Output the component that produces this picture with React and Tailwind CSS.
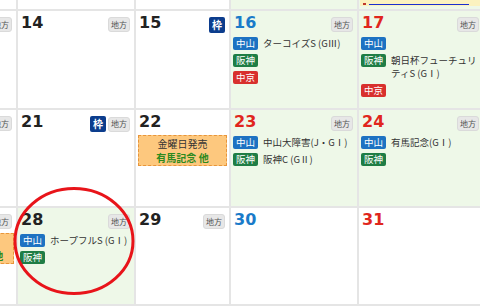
import React from 'react'

const badgeColors = {
  '中山': 'bg-[#1d72c2]',
  '阪神': 'bg-[#1f7d45]',
  '中京': 'bg-[#d8302d]',
}

const dayColors = {
  black: 'text-[#222222]',
  blue: 'text-[#1a7bc9]',
  red: 'text-[#e0261d]',
}

const rows = [
  [
    { day: '13', tags: ['地方'] },
    { day: '14', tags: ['地方'] },
    { day: '15', tags: ['枠'] },
    { day: '16', color: 'blue', green: true, tags: ['地方'], races: [['中山', 'ターコイズS (GⅢ)'], ['阪神', ''], ['中京', '']] },
    { day: '17', color: 'red', green: true, tags: ['地方'], races: [['中山', ''], ['阪神', '朝日杯フューチュリティS (GⅠ)'], ['中京', '']] },
  ],
  [
    { day: '20', tags: ['地方'] },
    { day: '21', tags: ['枠', '地方'] },
    { day: '22', sale: ['金曜日発売', '有馬記念 他'] },
    { day: '23', color: 'red', green: true, tags: ['地方'], races: [['中山', '中山大障害(J・GⅠ)'], ['阪神', '阪神C (GⅡ)']] },
    { day: '24', color: 'red', green: true, tags: ['地方'], races: [['中山', '有馬記念(GⅠ)'], ['阪神', '']] },
  ],
  [
    { day: '27', tags: ['地方'], sale: ['水曜日発売', 'ホープフルS(GⅠ) 他'] },
    { day: '28', green: true, tags: ['地方'], races: [['中山', 'ホープフルS (GⅠ)'], ['阪神', '']] },
    { day: '29', tags: ['地方'] },
    { day: '30', color: 'blue' },
    { day: '31', color: 'red' },
  ],
]

function Tag({ label }) {
  if (label === '枠') {
    return (
      <span className="w-[16px] h-[16px] rounded-[2px] bg-[#0c3d8d] text-white text-[10px] font-bold flex items-center justify-center leading-none">
        枠
      </span>
    )
  }
  return (
    <span className="w-[22px] h-[15px] rounded-[3px] bg-[#e7e7e7] border border-[#dadada] text-[#555] text-[8px] flex items-center justify-center leading-none">
      {label}
    </span>
  )
}

function Cell({ cell }) {
  return (
    <div className={`${cell.green ? 'bg-[#eef8e8]' : 'bg-white'} overflow-hidden`}>
      <div className="h-[26px] flex items-start justify-between pt-[4px] pl-[3px] pr-[4px]">
        <span className={`font-['DejaVu_Sans',sans-serif] font-bold text-[16px] leading-[16px] ${dayColors[cell.color || 'black']}`}>
          {cell.day}
        </span>
        {cell.tags && (
          <div className="flex items-center gap-[2px] pt-[2px]">
            {cell.tags.map(t => <Tag key={t} label={t} />)}
          </div>
        )}
      </div>

      {cell.races && (
        <div className="flex flex-col gap-[4px] pl-[2px] pr-[2px]">
          {cell.races.map(([place, name]) => (
            <div key={place} className="flex items-start gap-[5px]">
              <span className={`shrink-0 h-[13px] px-[3px] rounded-[2px] text-white text-[9.5px] leading-[13px] ${badgeColors[place]}`}>
                {place}
              </span>
              {name && <span className="text-[9.5px] leading-[13px] text-[#333]">{name}</span>}
            </div>
          ))}
        </div>
      )}

      {cell.sale && (
        <div className="-mt-[1px] mx-[2px] h-[31px] bg-[#fdc87e] border border-dashed border-[#e8953a] flex flex-col items-center justify-center text-[10px] leading-[14px] whitespace-nowrap">
          <span className="text-[#333]">{cell.sale[0]}</span>
          <span className="text-[#2d8a1e] font-bold">{cell.sale[1]}</span>
        </div>
      )}
    </div>
  )
}

export default function App() {
  return (
    <div className="relative w-[480px] h-[307px] overflow-hidden bg-white font-['Noto_Sans_CJK_JP',sans-serif]">
      <div className="-ml-[102px] w-max grid grid-cols-[118px_116px_93px_126px_124px] grid-rows-[9px_97px_96px_96px] gap-[2px] pb-[2px] bg-[#e5e5e5]">
        {/* previous week's tail */}
        <div className="bg-white" />
        <div className="bg-white" />
        <div className="bg-white" />
        <div className="bg-[#eef8e8]" />
        <div className="bg-[#eef8e8] overflow-hidden">
          <div className="mx-[1px] h-[6px] bg-[#fbf2bf] flex items-end gap-[3px] px-[3px] pb-[1px]">
            <span className="w-[3px] h-[2px] bg-[#c0392b]" />
            <span className="w-[100px] h-[1px] bg-[#1a2fd0]" />
          </div>
        </div>

        {rows.map(row => row.map(cell => <Cell key={cell.day} cell={cell} />))}
      </div>

      {/* hand drawn circle over the 28th */}
      <svg className="absolute left-[13px] top-[186px]" width="122" height="110" viewBox="0 0 122 110">
        <ellipse cx="61" cy="55" rx="59" ry="52.5" fill="none" stroke="#e8141a" strokeWidth="3" />
      </svg>
    </div>
  )
}
